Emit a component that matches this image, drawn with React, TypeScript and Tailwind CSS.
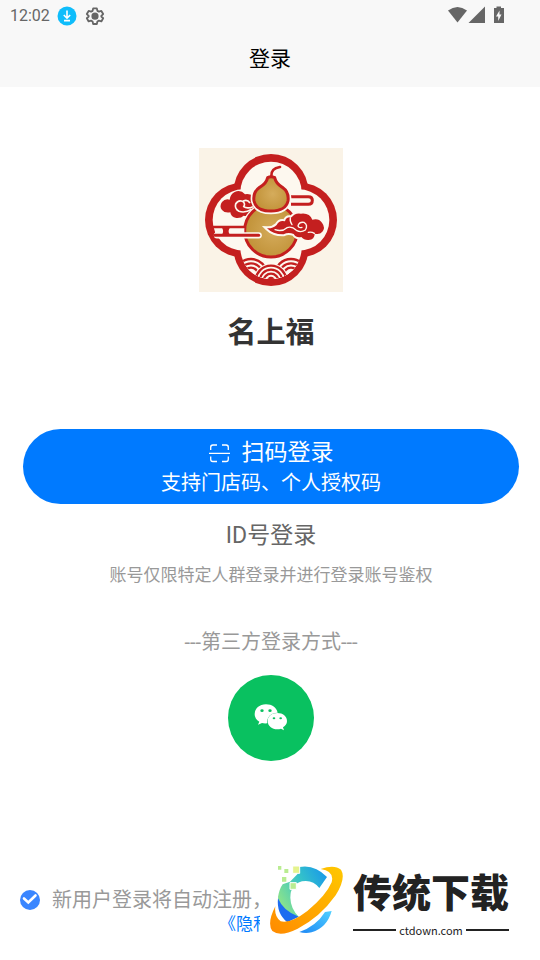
import React from 'react';

const RED = '#c41f1f';
const CREAM = '#fdf8ef';

function GourdLogo() {
  return (
    <svg viewBox="12 9 432 432" className="size-36" role="img" aria-label="名上福">
      <defs>
        <radialGradient id="gold" cx="0.55" cy="0.5" r="0.6">
          <stop offset="0" stopColor="#d5ac5c" />
          <stop offset="1" stopColor="#bf8f34" />
        </radialGradient>
        <clipPath id="bottomLobe">
          <circle cx="228" cy="309" r="93" />
        </clipPath>
      </defs>
      <rect x="12" y="9" width="432" height="432" fill="#faf3e7" />

      {/* Four-lobed frame */}
      <g fill={RED}>
        <circle cx="228" cy="139" r="112" />
        <circle cx="142" cy="225" r="112" />
        <circle cx="314" cy="225" r="112" />
        <circle cx="228" cy="311" r="112" />
      </g>
      <g fill={CREAM}>
        <circle cx="228" cy="142" r="92" />
        <circle cx="145" cy="225" r="92" />
        <circle cx="311" cy="225" r="92" />
        <circle cx="228" cy="308" r="92" />
      </g>

      {/* Waves */}
      <g clipPath="url(#bottomLobe)" fill={CREAM} stroke={RED} strokeWidth="7">
        {[168, 288].map((cx) => (
          <g key={cx}>
            <circle cx={cx} cy="390" r="48" />
            <circle cx={cx} cy="390" r="35" />
            <circle cx={cx} cy="390" r="22" />
          </g>
        ))}
        <circle cx="228" cy="408" r="53" stroke="none" />
        <circle cx="228" cy="408" r="46" />
        <circle cx="228" cy="408" r="34" />
        <circle cx="228" cy="408" r="22" />
        <circle cx="228" cy="408" r="9" fill={RED} />
      </g>

      {/* Loop on the right */}
      <path d="M288 155H340Q352 155 352 166Q352 178 340 178H288" fill="none" stroke={RED} strokeWidth="9" />

      {/* Left cloud */}
      <path
        d="M168 149Q156 145 150 148Q137 133 119 141Q106 147 104 164Q90 160 81 171Q72 184 81 195Q89 205 106 202Q107 216 124 219Q139 220 146 212Q160 216 168 204L184 190V160Z"
        fill={RED}
      />
      <path
        d="M170 193Q150 205 132 199Q118 191 122 177Q129 164 143 169Q153 177 145 186M145 184Q156 193 174 185M145 168Q157 162 165 174"
        fill="none"
        stroke={CREAM}
        strokeWidth="5"
      />

      {/* Gourd */}
      <circle cx="228" cy="258" r="88" fill={CREAM} />
      <circle cx="228" cy="257" r="79" fill="url(#gold)" stroke={RED} strokeWidth="9" />
      <path
        d="M218 98Q228 93 239 98Q243 116 262 127Q283 142 279 168Q272 198 228 198Q184 198 177 168Q173 142 194 127Q214 116 218 98Z"
        fill="url(#gold)"
        stroke={CREAM}
        strokeWidth="19"
      />
      <path
        d="M218 98Q228 93 239 98Q243 116 262 127Q283 142 279 168Q272 198 228 198Q184 198 177 168Q173 142 194 127Q214 116 218 98Z"
        fill="url(#gold)"
        stroke={RED}
        strokeWidth="9"
      />
      <path d="M229 94Q227 70 255 66" fill="none" stroke={RED} strokeWidth="8" strokeLinecap="round" />

      {/* Bars on the left */}
      <path d="M60 259H148" stroke={CREAM} strokeWidth="20" />
      <path d="M50 246H148" stroke={RED} strokeWidth="8" />
      <path d="M66 271H191" stroke={CREAM} strokeWidth="19" strokeLinecap="round" />
      <path d="M60 271H191" stroke={RED} strokeWidth="9" strokeLinecap="round" />
      <path d="M80 247Q89 259 80 271H106Q95 259 106 247Z" fill={RED} />

      {/* Right cloud */}
      <path
        d="M216 250Q234 251 245 240Q253 224 270 229Q273 214 290 217Q299 203 318 206Q344 203 352 224Q371 219 381 233Q392 248 382 260Q374 270 359 266Q359 283 341 285Q327 286 319 276Q304 280 296 267Q280 260 266 268Q235 269 216 250Z"
        fill={RED}
        stroke={CREAM}
        strokeWidth="12"
        paintOrder="stroke"
      />
      <path
        d="M240 254Q262 261 276 248Q290 242 304 256Q318 264 331 255Q340 240 327 232Q312 230 309 243Q312 250 321 247M286 218Q284 230 291 239M340 262Q350 260 358 265"
        fill="none"
        stroke={CREAM}
        strokeWidth="4"
        strokeLinecap="round"
      />
    </svg>
  );
}

function StatusBar() {
  return (
    <div className="flex h-8 items-center justify-between pr-8 pl-[10px] text-[#666]">
      <div className="flex items-center">
        <span className="text-[16px] leading-5">12:02</span>
        <svg viewBox="0 0 20 20" className="ml-[7px] size-5">
          <circle cx="10" cy="10" r="9.5" fill="#0fbdfb" />
          <path d="M10 4.5V12M6.8 9L10 12.2L13.2 9M7 14.6H13" fill="none" stroke="#fff" strokeWidth="1.6" />
        </svg>
        <svg viewBox="0 0 24 24" className="ml-2 size-5" fill="none" stroke="currentColor" strokeWidth="2.2" strokeLinejoin="round">
          <path d="M9.8 2.8h4.4l.7 3 1.8 1 2.9-.9 2.2 3.8-2.2 2.1v.8l2.2 2.1-2.2 3.8-2.9-.9-1.8 1-.7 3H9.8l-.7-3-1.8-1-2.9.9-2.2-3.8 2.2-2.1v-.8L2.2 9.7l2.2-3.8 2.9.9 1.8-1z" />
          <circle cx="12" cy="12.2" r="3.2" fill="currentColor" />
        </svg>
      </div>
      <svg viewBox="0 0 60 20" className="h-5 w-[60px]" fill="currentColor">
        <path d="M0 4.5Q9.5-2.5 19 4.5L9.5 16.5Z" />
        <path d="M37 .5V17H20.5Z" />
        <path d="M46 2h2.5V.5h4.500V2H56v15H46z" />
        <path d="M51.5 4.5L48 10.5H50.2V15L53.5 8.5H51.5Z" fill="#f8f8f8" />
      </svg>
    </div>
  );
}

function ScanIcon() {
  return (
    <svg viewBox="0 0 21 19" className="h-[19px] w-[21px]" fill="none" stroke="currentColor" strokeWidth="1.3">
      <path d="M1.7 6V3.2Q1.7 1 3.9 1H8M13 1H17.1Q19.3 1 19.3 3.2V6M1.7 12.5V15.3Q1.7 17.5 3.9 17.5H8M13 17.5H17.1Q19.3 17.5 19.3 15.3V12.5M0 9.3H21" />
    </svg>
  );
}

function WechatIcon() {
  return (
    <svg viewBox="104 101 100 84" className="h-[28px] w-[34px]" fill="#fff">
      <path d="M139 102C119 102 105 115 105 131C105 141 110 149 119 154L115 163L127 158Q133 160 143 159C140 141 154 127 174 127C171 112 157 102 139 102Z" />
      <path d="M173 128C156 128 144 138 144 152C144 167 157 177 173 177Q179 177 184 175L193 180L190 171C198 166 202 160 202 152C202 138 190 128 173 128Z" />
      <g fill="#09c160">
        <ellipse cx="127" cy="121" rx="5" ry="4" />
        <ellipse cx="151" cy="121" rx="5" ry="4" />
        <ellipse cx="163" cy="144" rx="4" ry="3" />
        <ellipse cx="183" cy="144" rx="4" ry="3" />
      </g>
    </svg>
  );
}

function Watermark() {
  return (
    <div className="absolute right-0 bottom-4 flex h-22 w-[280px] items-center bg-white pl-[10px]">
      <svg viewBox="30 30 222 210" className="h-[70px] w-[74px] shrink-0">
        <defs>
          <linearGradient id="ring" x1="0" y1="1" x2="1" y2="0">
            <stop offset="0" stopColor="#ff8a00" />
            <stop offset="1" stopColor="#ffc800" />
          </linearGradient>
          <linearGradient id="arc" x1="0" y1="0.6" x2="1" y2="0">
            <stop offset="0" stopColor="#8be38b" />
            <stop offset="0.5" stopColor="#35c3c9" />
            <stop offset="1" stopColor="#1593ee" />
          </linearGradient>
          <linearGradient id="tail" x1="0" y1="1" x2="1" y2="0">
            <stop offset="0" stopColor="#1e88f5" />
            <stop offset="1" stopColor="#4fd0ff" />
          </linearGradient>
        </defs>
        <path d="M118 36Q164 27 201 66L178 99Q158 73 126 79Q91 88 91 128Q92 161 116 185L82 199Q54 172 54 126Q58 102 68 88L90 80L112 58Z" fill="url(#arc)" />
        <path d="M54 130Q70 169 116 185L82 202Q49 176 54 130Z" fill="#1d6cf0" />
        <path d="M118 231Q169 213 195 171L215 168Q201 218 155 232Q136 236 118 231Z" fill="url(#tail)" />
        <path
          d="M182 42Q223 27 243 44Q259 69 227 121Q180 187 113 221Q61 247 37 228Q20 205 46 154Q42 185 62 199Q91 207 142 168Q198 122 215 82Q224 48 182 42Z"
          fill="url(#ring)"
        />
        <g fill="#b9ec91">
          <path d="M54 33h10v11H54zM73 42h12v12H73zM66 66h13v14H66z" />
          <path d="M98 33h21v22H98z" fill="#e5f38d" stroke="#fff" strokeWidth="3" />
          <path d="M90 83h19v20H90z" stroke="#fff" strokeWidth="3" />
        </g>
      </svg>
      <div className="ml-[9px] w-[156px] pt-2 text-center text-[#222]">
        <div className="text-[39px] leading-[52px] font-black whitespace-nowrap">传统下载</div>
        <div className="flex items-center gap-[3px] font-['Noto_Sans_CJK_SC',sans-serif] text-[11px] leading-5">
          <span className="h-[2px] flex-1 bg-[#222]"></span>
          <span>ctdown.com</span>
          <span className="h-[2px] flex-1 bg-[#222]"></span>
        </div>
      </div>
    </div>
  );
}

export default function App() {
  return (
    <div className="relative flex min-h-screen flex-col overflow-hidden bg-white font-[Roboto,'Noto_Sans_CJK_SC',sans-serif]">
      <header className="bg-[#f8f8f8]">
        <StatusBar />
        <h1 className="text-center text-[21px] leading-[55px] text-black">登录</h1>
      </header>

      <main className="flex flex-col items-center pr-[21px] pl-[23px]">
        <div className="mt-[61px]">
          <GourdLogo />
        </div>
        <h2 className="mt-[21px] text-[29px] leading-10 font-bold text-[#333]">名上福</h2>

        <button type="button" className="mt-[76px] flex h-[75px] w-full flex-col items-center justify-center rounded-full bg-[#007aff] pt-[3px] text-white">
          <span className="flex items-center gap-3 text-[23px] leading-[30px]">
            <ScanIcon />
            扫码登录
          </span>
          <span className="text-[20px] leading-[30px]">支持门店码、个人授权码</span>
        </button>

        <button type="button" className="mt-4 text-[23px] leading-8 text-[#666]">ID号登录</button>
        <p className="mt-[11px] text-[17px] leading-6 text-[#999]">账号仅限特定人群登录并进行登录账号鉴权</p>

        <p className="mt-[41px] text-[20px] leading-7 text-[#999]">---第三方登录方式---</p>
        <button type="button" aria-label="微信" className="mt-[19px] flex size-[86px] items-center justify-center rounded-full bg-[#09c160]">
          <WechatIcon />
        </button>
      </main>

      <footer className="mt-auto pb-6 pl-5">
        <label className="flex items-center gap-3 text-[20px] leading-6 whitespace-nowrap text-[#999]">
          <span className="grid size-5 place-items-center">
            <input type="checkbox" defaultChecked className="peer col-start-1 row-start-1 size-5 appearance-none rounded-full border border-[#ccc] checked:border-0 checked:bg-[#3a86ff]" />
            <svg viewBox="0 0 20 20" className="pointer-events-none col-start-1 row-start-1 size-5 opacity-0 peer-checked:opacity-100" fill="none" stroke="#fff" strokeWidth="2.6">
              <path d="M4 8.5L8.3 12.5L15.5 5.5" strokeLinecap="round" />
            </svg>
          </span>
          新用户登录将自动注册，
        </label>
        <a href="#privacy" className="ml-[199px] block text-[17px] leading-6 whitespace-nowrap text-[#007aff]">《隐私</a>
      </footer>

      <Watermark />
    </div>
  );
}
